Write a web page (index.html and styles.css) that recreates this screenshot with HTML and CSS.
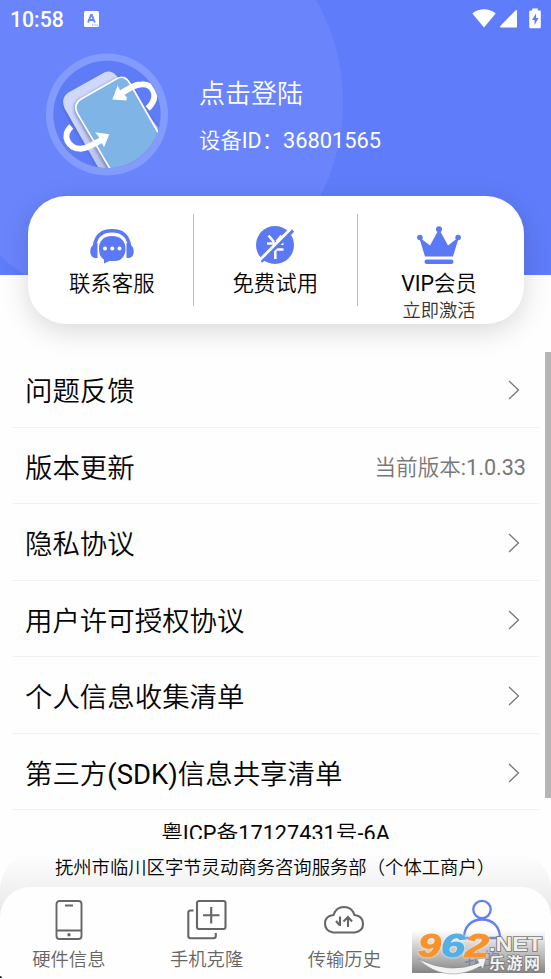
FILE: index.html
```html
<!DOCTYPE html>
<html lang="zh-CN">
<head>
<meta charset="utf-8">
<title>我的</title>
<link rel="stylesheet" href="styles.css">
</head>
<body>
<div class="app">
  <header class="header">
    <div class="status">
      <span class="time">10:58</span>
      <svg class="status-app" width="15" height="16" viewBox="0 0 15 16"><rect width="15" height="16" rx="1.5" fill="#fff"/><path d="M4 11.500 7 4h.8L10.800 11.500M5.200 9h4.400" fill="none" stroke="#6a84fb" stroke-width="1.900"/><path d="M8 14h1.200M10.400 14h1.200M12.600 14h1.200" stroke="#6a84fb" stroke-width="1.200"/></svg>
      <svg class="status-icons" width="70" height="21" viewBox="0 0 70 21"><path d="M.3 5.500C7.500-.1 16.500-.1 23.700 5.500L12 19.500Z" fill="#fff"/><path d="M45 2v17.500H29q-1.500-.5-.5-1.800L43.500 2.500Z" fill="#fff"/><path d="M57.200 3.500q0-1 1-1h2V.5h5.600v2h2q1 0 1 1v15.700q0 1-1 1h-9.600q-1 0-1-1Z" fill="#fff"/><path d="M64 5.500 60 12h2.500v5l4-7H64Z" fill="#5f7cf9"/></svg>
    </div>
    <div class="profile">
      <svg class="avatar" width="122" height="123" viewBox="33 24 366 368">
        <defs>
          <clipPath id="face"><path d="M30 0H369V369H30Z"/></clipPath>
          <clipPath id="disc" clip-path="url(#face)"><circle cx="216" cy="208" r="161"/></clipPath>
          <linearGradient id="side" x1="0" y1="0" x2="1" y2="1"><stop offset=".3" stop-color="#cfd8fb"/><stop offset="1" stop-color="#a5aee0"/></linearGradient>
          <filter id="soft" x="-20%" y="-20%" width="140%" height="140%"><feGaussianBlur stdDeviation="5"/></filter>
        </defs>
        <circle cx="216" cy="208" r="183" fill="#839bfd"/>
        <circle cx="216" cy="208" r="161" fill="#5f7cf7"/>
        <g clip-path="url(#disc)">
          <path d="M191 375 88 196Q74 164 98 148L210 87Q230 78 245 94L380 260V375Z" fill="#435bc8" opacity=".6" filter="url(#soft)"/>
          <path d="M194 375 89 190Q76 160 99 143L208 82Q228 73 244 91L380 260V375Z" fill="url(#side)"/>
          <path d="M218 378 122 212Q106 178 136 160L240 101Q268 86 284 115L380 282V380Z" fill="#6673ae" opacity=".65" filter="url(#soft)"/>
          <path d="M227 374 128 206Q112 177 141 160L245 101Q270 87 285 115L382 284V374Z" fill="#7fb4e7" stroke="#fff" stroke-width="5"/>
          <path d="M338 190C373 157 358 116 321 117C297 117 280 132 254 147" fill="none" stroke="#fff" stroke-width="18"/>
          <path d="M232 163 248 121 256 137 276 157 274 166Z" fill="#fff"/>
          <path d="M109 244C78 271 100 311 137 311C160 309 178 296 204 282" fill="none" stroke="#fff" stroke-width="18"/>
          <path d="M223 267 180 261 190 273 199 290 207 306Z" fill="#fff"/>
        </g>
      </svg>
      <div class="who"><div class="login">点击登陆</div><div class="device">设备<span class="lat">ID</span>：<span class="num">36801565</span></div></div>
    </div>
  </header>

  <section class="card">
    <div class="tile">
      <svg width="44" height="36" viewBox="0 0 44 36"><path d="M4.500 17C6 6 13 1.800 22 1.800S38 6 39.500 17" fill="none" stroke="#5c79f5" stroke-width="3.500"/><path d="M7.500 14v15H5Q.2 28 .2 22T7.500 14ZM36.500 14v15H39q4.800-1 4.800-7T36.500 14Z" fill="#5c79f5"/><path d="M22 7C13 7 9 12.500 9 19.500 9 25 10.500 28.500 14 30.500V34.500L19.500 32H25C32 32 35.500 26.500 35.500 19.500S31 7 22 7Z" fill="#5c79f5"/><g fill="#fff"><circle cx="15" cy="19.500" r="2"/><circle cx="22.300" cy="19.500" r="2"/><circle cx="29.500" cy="19.500" r="2"/></g></svg>
      <div class="tile-label">联系客服</div>
    </div>
    <div class="tile">
      <svg class="free" width="40" height="40" viewBox="0 0 40 40"><circle cx="20" cy="20" r="19" fill="#5c79f5"/><path d="M13.500 10.500l5.500 6.500M26.500 10.500l-5 6M12 18.500h9M18 18.800h10.500M18 24.500h10.500M20.300 18v16" stroke="#fff" stroke-width="2.500"/><path d="M6 36.500 38 5.500" stroke="#5c79f5" stroke-width="3.500"/><path d="M3.300 36.500 35.500 4" stroke="#fff" stroke-width="2.800"/></svg>
      <div class="tile-label">免费试用</div>
    </div>
    <div class="tile">
      <svg class="crown" width="44" height="38" viewBox="0 0 44 38"><path d="m2 11 11 8.500L22 3l9 16.500L42 11l-6 19.500H8Z" fill="#5c79f5"/><g fill="#5c79f5"><circle cx="22" cy="3.300" r="3"/><circle cx="2.900" cy="11.500" r="2.800"/><circle cx="41.100" cy="11.500" r="2.800"/><rect x="7.500" y="33.500" width="29" height="4.500" rx="2.200"/></g></svg>
      <div class="tile-label"><span class="lat">VIP</span>会员</div>
      <div class="tile-sub">立即激活</div>
    </div>
  </section>

  <main class="list">
    <div class="rows">
      <div class="row"><span>问题反馈</span><svg class="chev" width="12" height="20" viewBox="0 0 12 20"><path d="m1 1 9.500 9L1 19"/></svg></div>
      <div class="row"><span>版本更新</span><span class="version">当前版本<span class="lat">:1.0.33</span></span></div>
      <div class="row"><span>隐私协议</span><svg class="chev" width="12" height="20" viewBox="0 0 12 20"><path d="m1 1 9.500 9L1 19"/></svg></div>
      <div class="row"><span>用户许可授权协议</span><svg class="chev" width="12" height="20" viewBox="0 0 12 20"><path d="m1 1 9.500 9L1 19"/></svg></div>
      <div class="row"><span>个人信息收集清单</span><svg class="chev" width="12" height="20" viewBox="0 0 12 20"><path d="m1 1 9.500 9L1 19"/></svg></div>
      <div class="row"><span>第三方<span class="lat">(SDK)</span>信息共享清单</span><svg class="chev" width="12" height="20" viewBox="0 0 12 20"><path d="m1 1 9.500 9L1 19"/></svg></div>
      <div class="icp">粤<span class="lat">ICP</span>备<span class="lat">17127431</span>号<span class="lat">-6A</span></div>
    </div>
    <div class="scrollbar"></div>
  </main>

  <footer class="footer">
    <div class="company">抚州市临川区字节灵动商务咨询服务部（个体工商户）</div>
    <nav class="nav">
      <div class="tab">
        <svg width="44" height="42" viewBox="0 0 44 42"><g fill="none" stroke="#666" stroke-width="1.900"><rect x="9.500" y="2" width="25" height="38" rx="3"/><path d="M10 31.500h24M18 6.500h8"/></g><circle cx="22" cy="35.700" r="1.700" fill="#666"/></svg>
        <span>硬件信息</span>
      </div>
      <div class="tab">
        <svg width="44" height="42" viewBox="0 0 44 42"><g fill="none" stroke="#666" stroke-width="2.100"><rect x="12" y="2" width="28.500" height="28" rx="2"/><path d="M26.200 8v16.500M18 16.200h16.500M8.500 11.500H5.500q-2.200 0-2.200 2.200V37q0 2.200 2.200 2.200H28.500q2.300 0 2.300-2.200V34"/></g></svg>
        <span>手机克隆</span>
      </div>
      <div class="tab">
        <svg width="44" height="42" viewBox="0 0 44 42"><g fill="none" stroke="#666" stroke-width="2.100"><path d="M11 33.500Q3 32 3 24.500 3 17 11.500 16 14 8 22 8T32.500 16Q41 17 41 25 41 32 33 33.500Z"/><path d="M18 17.500v9.500M14 22l4 4.500M26 28v-9.500M21.500 22.500l4.500-4.500 4 4.500"/></g></svg>
        <span>传输历史</span>
      </div>
      <div class="tab active">
        <svg width="44" height="42" viewBox="0 0 44 42"><g fill="none" stroke="#6480ef" stroke-width="2.300"><circle cx="22" cy="10.500" r="8.700"/><path d="M4 39C4 28 11 20.500 22 20.500S40 28 40 39Z"/></g></svg>
        <span>我的</span>
      </div>
    </nav>
    <svg class="watermark" width="133" height="43" viewBox="0 0 133 43">
      <defs><linearGradient id="shade" x1="0" y1="0" x2="0" y2="1"><stop offset="0" stop-color="#aaa" stop-opacity="0"/><stop offset=".35" stop-color="#999" stop-opacity=".42"/><stop offset="1" stop-color="#737373" stop-opacity=".88"/></linearGradient></defs>
      <rect width="133" height="43" fill="url(#shade)"/>
      <g class="mark-num"><text x="6" y="27" textLength="23" lengthAdjust="spacingAndGlyphs" fill="#f7932d" stroke="#f7932d">9</text><text x="29" y="27" textLength="24" lengthAdjust="spacingAndGlyphs" fill="#54afe5" stroke="#54afe5">6</text><text x="53" y="27" textLength="24" lengthAdjust="spacingAndGlyphs" fill="#f7932d" stroke="#f7932d">2</text></g>
      <path d="M6 29Q38 45 67 33L65 29 74 28 71 39 69 36Q34 55 6 29Z" fill="#f3f3f3" stroke="#888" stroke-width=".5"/>
      <text class="mark-net" x="77" y="21" textLength="53" lengthAdjust="spacingAndGlyphs">.NET</text>
      <text class="mark-cn" x="77" y="39" textLength="51">乐游网</text>
    </svg>
    <i class="speck"></i>
  </footer>
</div>
</body>
</html>
```
FILE: styles.css
```css
* { box-sizing: border-box; }
body { margin: 0; }
.app {
  width: 551px;
  height: 979px;
  overflow: hidden;
  display: flex;
  flex-direction: column;
  background: #fefefe;
  color: #050505;
  font-family: Roboto, "Noto Sans CJK SC", sans-serif;
  font-weight: 350;
  position: relative;
}
.app svg { display: block; flex: none; }
.lat { font-weight: 400; }
.header {
  height: 275px;
  flex: none;
  color: #fff;
  background: radial-gradient(circle at 137px 102px, #6a85fc 0 205.500px, #5f7cfa 206.500px);
}
.status { height: 37px; display: flex; align-items: center; padding: 1px 9px 0 10px; }
.time { font-size: 21.200px; font-weight: 500; width: 74px; }
.status-app { margin-top: -1px; }
.status-icons { margin-left: auto; margin-top: -1px; }
.profile { display: flex; padding: 16px 0 0 46px; }
.who { margin-left: 31px; padding-top: 22px; }
.login { font-size: 26px; line-height: 38px; }
.device { font-size: 21.400px; line-height: 32px; margin-top: 12px; white-space: nowrap; }
.num { font-size: 21.800px; font-weight: 400; }
.card {
  width: 496px;
  height: 128px;
  flex: none;
  margin: -79px auto 0 27.500px;
  border-radius: 38px;
  background: #fff;
  box-shadow: 0 7px 28px rgba(0, 0, 0, .15);
  display: grid;
  grid-template-columns: 165.500px 163.500px 167px;
  padding-top: 18px;
}
.tile {
  height: 92px;
  display: flex;
  flex-direction: column;
  align-items: center;
  padding: 15px 0 0 3px;
}
.tile + .tile { border-left: 1px solid #bbb; padding-left: 0; }
.tile svg { height: 36px; }
.tile svg.free { height: 40px; margin: -4px 0 0; }
.tile svg.crown { height: 38px; margin: -6px 0 4px; }
.tile:last-child { padding-top: 18px; padding-right: 3px; }
.tile-label { font-size: 21.400px; line-height: 30px; margin-top: 4px; }
.tile:last-child .tile-label { margin-top: 1px; }
.tile-sub { font-size: 18.300px; line-height: 24px; color: #333; }
.list { height: 488px; flex: none; margin-top: 27px; overflow: hidden; display: flex; }
.rows { width: 527px; margin-left: 12px; }
.row {
  height: 76.500px;
  border-bottom: 1.500px solid #f2f2f2;
  padding: 0 13px;
  display: flex;
  align-items: center;
  justify-content: space-between;
  font-size: 27.450px;
}
.row > span { margin-top: 1px; }
.chev { margin: 3px 6px 0 0; fill: none; stroke: #777; stroke-width: 1.300; }
.version { font-size: 21.600px; color: #777; }
.icp { text-align: center; font-size: 21.700px; line-height: 32px; padding-top: 8px; white-space: nowrap; }
.scrollbar { width: 6px; height: 446px; margin: 1px 0 0 auto; background: #b5b5b5; }
.footer {
  height: 126px;
  flex: none;
  margin-top: 14px;
  position: relative;
  border-radius: 36px 36px 0 0;
  background: linear-gradient(#fefefe, #f2f2f2 34px, #e6e6e6 65px);
}
.company { height: 34px; line-height: 29px; text-align: center; font-size: 18.350px; white-space: nowrap; padding-right: 1px; }
.nav {
  height: 92px;
  background: #fefefe;
  border-radius: 30px 30px 0 0;
  display: grid;
  grid-template-columns: repeat(4, 1fr);
  padding-top: 12px;
}
.tab { display: flex; flex-direction: column; align-items: center; color: #666; font-size: 18.300px; line-height: 28px; }
.tab span { margin-top: 5px; }
.tab.active { color: #6480ef; }
.watermark { position: absolute; left: 412px; bottom: 6px; overflow: visible; }
.mark-num { font: italic 700 33px "Liberation Sans", sans-serif; stroke-width: 1px; filter: drop-shadow(0 0 1px #fff); }
.mark-net { font: 700 20px "Liberation Sans", sans-serif; fill: #eee; stroke: #777; stroke-width: 1.600px; paint-order: stroke; }
.mark-cn { font: 700 16px "Noto Sans CJK SC", sans-serif; fill: #f2f2f2; stroke: #777; stroke-width: 1.500px; paint-order: stroke; }
.speck { position: absolute; left: 0; bottom: 1px; width: 2px; height: 2px; background: #222; border-radius: 0 2px 0 0; }
```
